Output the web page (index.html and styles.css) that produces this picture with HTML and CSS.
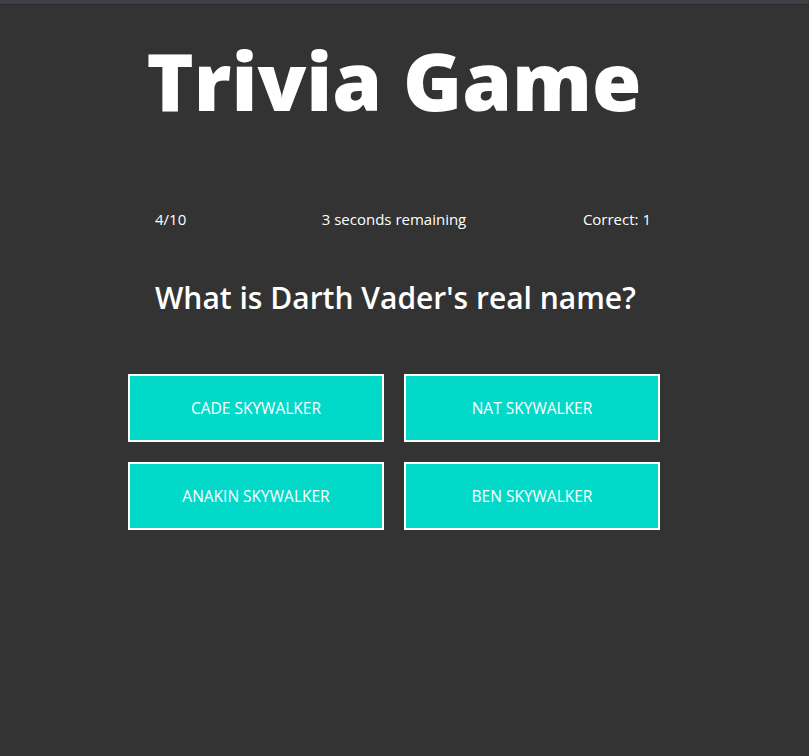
FILE: index.html
```html
<!DOCTYPE html>
<html lang="en">
<head>
<meta charset="utf-8">
<title>Trivia Game</title>
<link rel="stylesheet" href="styles.css">
</head>
<body>
<div class="topbar"></div>
<main class="game">
  <h1 class="title">Trivia Game</h1>
  <div class="stats">
    <span class="stat stat-left">4/10</span>
    <span class="stat stat-mid">3 seconds remaining</span>
    <span class="stat stat-right">Correct: 1</span>
  </div>
  <h2 class="question">What is Darth Vader's real name?</h2>
  <div class="answers">
    <button class="answer">CADE SKYWALKER</button>
    <button class="answer">NAT SKYWALKER</button>
    <button class="answer">ANAKIN SKYWALKER</button>
    <button class="answer">BEN SKYWALKER</button>
  </div>
</main>
</body>
</html>
```
FILE: styles.css
```css
html, body {
  margin: 0;
  padding: 0;
}
body {
  background: #333333;
  color: #ffffff;
  font-family: "Open Sans", "Noto Sans", sans-serif;
  height: 756px;
  overflow: hidden;
}
.topbar {
  height: 4px;
  background: #3c4045;
  border-bottom: 1px solid #282a2c;
}
.game {
  width: 532px;
  margin-left: 128px;
}
.title {
  margin: 32px 0 0;
  font-size: 80px;
  line-height: 86px;
  font-weight: 800;
  text-align: center;
  letter-spacing: 0;
}
.stats {
  display: grid;
  grid-template-columns: 1fr 1fr 1fr;
  margin-top: 86px;
  font-size: 15px;
  line-height: 20px;
}
.stat-left { padding-left: 27px; }
.stat-mid { text-align: center; white-space: nowrap; }
.stat-right { text-align: right; padding-right: 9px; }
.question {
  margin: 49px 0 0;
  padding-left: 27px;
  font-size: 30px;
  line-height: 40px;
  font-weight: 600;
}
.answers {
  display: grid;
  grid-template-columns: 256px 256px;
  column-gap: 20px;
  row-gap: 20px;
  margin-top: 56px;
}
.answer {
  height: 68px;
  background: #02d9c8;
  border: 2px solid #ffffff;
  color: #ffffff;
  font-family: "Open Sans", "Noto Sans", sans-serif;
  font-size: 15.5px;
  padding: 0;
  cursor: pointer;
}
```
